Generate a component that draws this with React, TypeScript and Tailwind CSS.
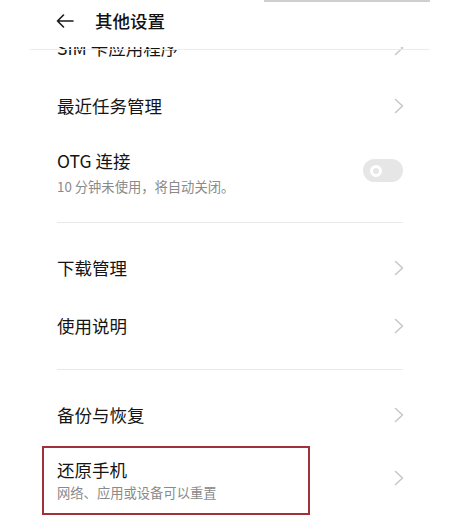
import React from "react";

const font = { fontFamily: '"Noto Sans CJK SC", "Noto Sans", sans-serif' };

function Chevron() {
  return (
    <svg width="10" height="16" viewBox="0 0 10 16" fill="none" className="shrink-0">
      <path d="M1.5 1.5L8.5 8L1.5 14.5" stroke="#c6c6c6" strokeWidth="1.5" strokeLinecap="round" strokeLinejoin="round" />
    </svg>
  );
}

function Row({ title }: { title: string }) {
  return (
    <div className="flex h-[58px] items-center justify-between pl-[57px] pr-[46px]">
      <span className="text-[17.5px] leading-[24px] text-[#151515]">{title}</span>
      <Chevron />
    </div>
  );
}

function Divider() {
  return <div className="ml-[57px] mr-[47px] h-px bg-[#e9e9e9]" />;
}

export default function App() {
  return (
    <div className="relative flex h-[529px] w-[450px] flex-col overflow-hidden bg-white" style={font}>
      {/* header */}
      <div className="flex h-[47px] shrink-0 items-start bg-white pl-[56px] pt-[9px]">
        <div className="flex h-[24px] items-center">
          <svg width="18" height="14" viewBox="0 0 18 14" fill="none">
            <path d="M17 7H1.5M7.5 1L1.5 7L7.5 13" stroke="#1a1a1a" strokeWidth="1.6" strokeLinecap="round" strokeLinejoin="round" />
          </svg>
        </div>
        <span className="ml-[21px] text-[17.5px] font-medium leading-[24px] text-[#111]">其他设置</span>
      </div>

      {/* list */}
      <div className="flex-1 overflow-hidden">
        <div className="-mt-[28px]">
          <Row title="SIM 卡应用程序" />
          <Row title="最近任务管理" />
          <div className="flex items-start justify-between pb-[26px] pl-[57px] pr-[47px] pt-[14px]">
            <div className="flex flex-col">
              <span className="text-[17.5px] leading-[24px] text-[#151515]">OTG 连接</span>
              <span className="mt-[5px] text-[13.3px] leading-[18px] text-[#8a8a8a]">10 分钟未使用，将自动关闭。</span>
            </div>
            <div className="mt-[10px] flex h-[23px] w-[40px] items-center rounded-full bg-[#e6e6e6] pl-[7px]">
              <div className="h-[12px] w-[12px] rounded-full border-[3px] border-white bg-[#e6e6e6]" />
            </div>
          </div>
          <Divider />
          <div className="pb-[14px] pt-[16px]">
            <Row title="下载管理" />
            <Row title="使用说明" />
          </div>
          <Divider />
          <div className="pt-[16px]">
            <Row title="备份与恢复" />
            <div className="relative flex h-[68px] items-center justify-between pl-[57px] pr-[46px]">
              <div className="mt-[4px] flex flex-col">
                <span className="text-[17.5px] leading-[24px] text-[#151515]">还原手机</span>
                <span className="mt-[2px] text-[13.3px] leading-[18px] text-[#8a8a8a]">网络、应用或设备可以重置</span>
              </div>
              <Chevron />
              <div className="pointer-events-none absolute left-[42px] top-[2px] h-[69px] w-[268px] border-2 border-[#a33039]" />
            </div>
          </div>
        </div>
      </div>

      {/* overlays */}
      <div className="absolute left-[264px] top-0 h-[2px] w-[166px] bg-[#cfcfcf]" />
      <div className="absolute left-[30px] top-[49px] h-px w-[400px] bg-[#ececec]" />
    </div>
  );
}
